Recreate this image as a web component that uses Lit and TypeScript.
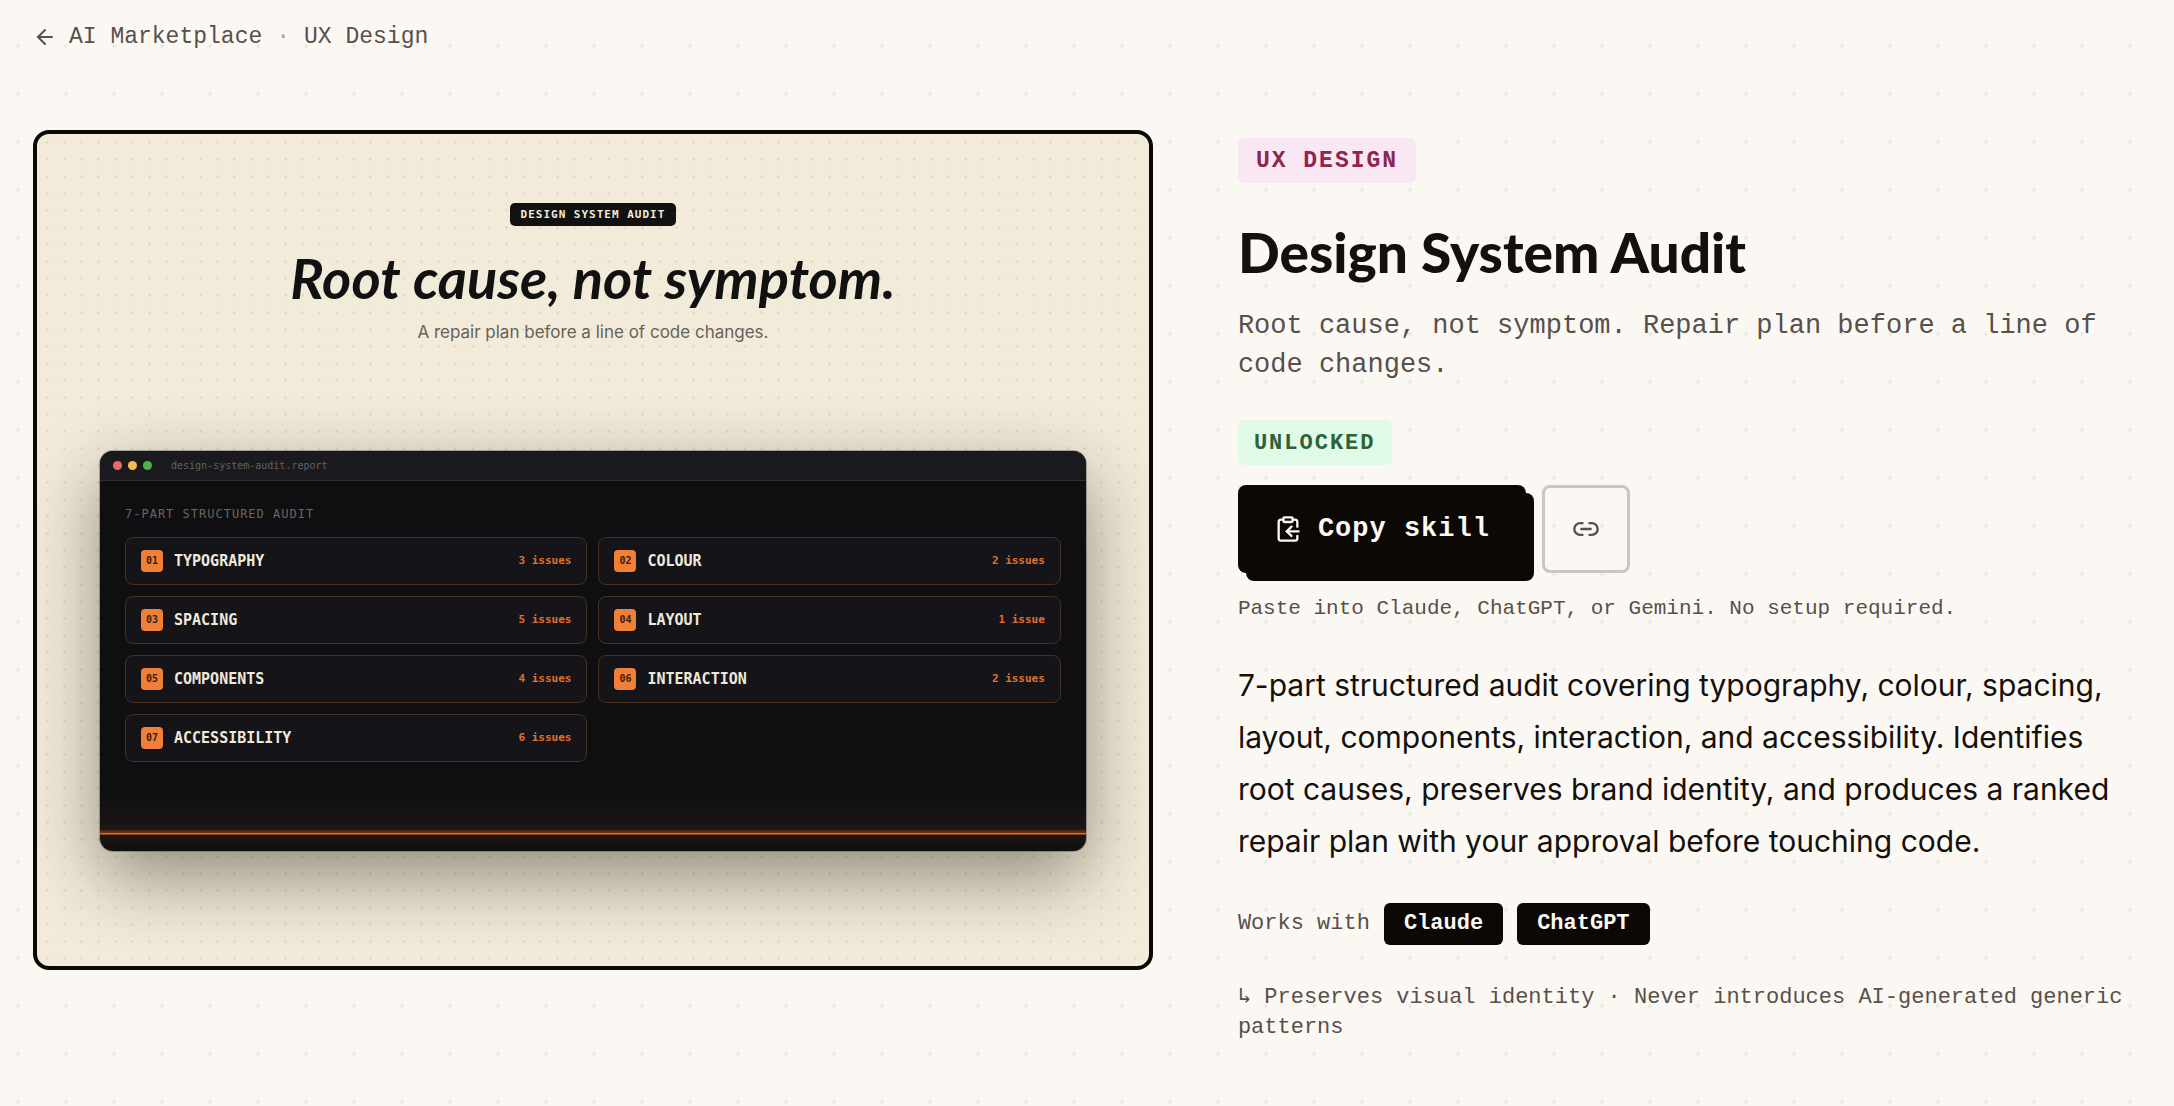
import { LitElement, html, svg, css } from "lit";
import { customElement, property } from "lit/decorators.js";

interface AuditPart {
  id: string;
  name: string;
  issues: number;
}

const PARTS: AuditPart[] = [
  { id: "01", name: "TYPOGRAPHY", issues: 3 },
  { id: "02", name: "COLOUR", issues: 2 },
  { id: "03", name: "SPACING", issues: 5 },
  { id: "04", name: "LAYOUT", issues: 1 },
  { id: "05", name: "COMPONENTS", issues: 4 },
  { id: "06", name: "INTERACTION", issues: 2 },
  { id: "07", name: "ACCESSIBILITY", issues: 6 },
];

const ICONS = {
  arrowLeft: svg`<path d="m12 19-7-7 7-7"/><path d="M19 12H5"/>`,
  clipboard: svg`<rect width="8" height="4" x="8" y="2" rx="1" ry="1"/><path d="M8 4H6a2 2 0 0 0-2 2v14a2 2 0 0 0 2 2h12a2 2 0 0 0 2-2v-2"/><path d="M16 4h2a2 2 0 0 1 2 2v4"/><path d="M21 14H11"/><path d="m15 10-4 4 4 4"/>`,
  link: svg`<path d="M9 17H7A5 5 0 0 1 7 7h2"/><path d="M15 7h2a5 5 0 1 1 0 10h-2"/><path d="M8 12h8"/>`,
};

function icon(name: keyof typeof ICONS, size: number) {
  return html`<svg width=${size} height=${size} viewBox="0 0 24 24" fill="none" stroke="currentColor"
    stroke-width="2" stroke-linecap="round" stroke-linejoin="round" aria-hidden="true">${ICONS[name]}</svg>`;
}

@customElement("audit-preview")
export class AuditPreview extends LitElement {
  @property({ attribute: false }) parts: AuditPart[] = [];

  static styles = css`
    :host {
      display: block;
    }
    .frame {
      box-sizing: border-box;
      aspect-ratio: 4 / 3;
      display: flex;
      flex-direction: column;
      align-items: center;
      padding: 69px 63px 115px;
      border: 4px solid #0c0805;
      border-radius: 16px;
      overflow: hidden;
      background-color: #f3ebd9;
      background-image: radial-gradient(circle, #e0d0b8 0, rgba(224, 208, 184, 0) 2px);
      background-size: 17px 17px;
      background-position: 2px 0;
    }
    .label {
      padding: 0 11px;
      border-radius: 5px;
      background: #111112;
      color: #f3ebd9;
      font: 700 11px/23px "DejaVu Sans Mono", monospace;
      letter-spacing: 1px;
    }
    .headline {
      margin: 18px 0 8px;
      color: #111112;
      font: italic 700 56px/68px Lato, sans-serif;
    }
    .tagline {
      margin: 0;
      color: #66625a;
      font: 400 17px/24px Inter, sans-serif;
    }
    .window {
      box-sizing: border-box;
      align-self: stretch;
      height: 400px;
      margin-top: auto;
      display: flex;
      flex-direction: column;
      border-radius: 13px;
      overflow: hidden;
      background: #0f0f11;
      box-shadow: 0 0 0 1px rgba(60, 60, 64, 0.35), 0 26px 72px rgba(20, 20, 10, 0.45);
      font-family: "DejaVu Sans Mono", monospace;
    }
    .bar {
      display: flex;
      align-items: center;
      gap: 6px;
      height: 29px;
      padding: 0 13px;
      background: #1a1a1e;
      border-bottom: 1px solid #2f2e2e;
    }
    .light {
      width: 9px;
      height: 9px;
      border-radius: 50%;
    }
    .red { background: #ee6a5f; }
    .amber { background: #f5bd4f; }
    .green { background: #4fb04c; }
    .file {
      margin-left: 13px;
      color: #626063;
      font-size: 10px;
    }
    .content {
      flex: 1;
      padding: 24px 25px 0;
    }
    .heading {
      margin: 0 0 14px;
      color: #6a6661;
      font-weight: 400;
      font-size: 12px;
      line-height: 18px;
      letter-spacing: 1px;
    }
    .grid {
      display: grid;
      grid-template-columns: repeat(2, minmax(0, 1fr));
      gap: 11px;
      margin: 0;
      padding: 0;
      list-style: none;
    }
    .part {
      box-sizing: border-box;
      display: flex;
      align-items: center;
      gap: 11px;
      height: 48px;
      padding: 0 15px;
      border: 1px solid #46301f;
      border-radius: 8px;
      background: #151519;
    }
    .badge {
      width: 22px;
      border-radius: 4px;
      background: #f07f38;
      color: #3d1c0b;
      font-weight: 700;
      font-size: 10px;
      line-height: 22px;
      text-align: center;
    }
    .name {
      flex: 1;
      color: #efe9da;
      font-weight: 700;
      font-size: 15px;
    }
    .issues {
      color: #e0702d;
      font-weight: 700;
      font-size: 11px;
    }
    .glow {
      height: 54px;
      background: linear-gradient(
        to bottom,
        rgba(240, 127, 56, 0) 0,
        rgba(240, 127, 56, 0.06) 32px,
        #6e2f0e 35px,
        #6e2f0e 36px,
        #cf7436 36px,
        #cf7436 37px,
        #8a4116 37px,
        #8a4116 38px,
        rgba(240, 127, 56, 0.06) 38px,
        rgba(240, 127, 56, 0) 54px
      );
    }
  `;

  render() {
    return html`
      <section class="frame">
        <span class="label">DESIGN SYSTEM AUDIT</span>
        <h2 class="headline">Root cause, not symptom.</h2>
        <p class="tagline">A repair plan before a line of code changes.</p>
        <div class="window">
          <div class="bar">
            <span class="light red"></span>
            <span class="light amber"></span>
            <span class="light green"></span>
            <span class="file">design-system-audit.report</span>
          </div>
          <div class="content">
            <h3 class="heading">7-PART STRUCTURED AUDIT</h3>
            <ul class="grid">
              ${this.parts.map(
                (p) => html`<li class="part">
                  <span class="badge">${p.id}</span>
                  <span class="name">${p.name}</span>
                  <span class="issues">${p.issues} ${p.issues === 1 ? "issue" : "issues"}</span>
                </li>`
              )}
            </ul>
          </div>
          <div class="glow"></div>
        </div>
      </section>
    `;
  }
}

@customElement("app-root")
export class AppRoot extends LitElement {
  static styles = css`
    :host {
      display: block;
      box-sizing: border-box;
      min-height: 100vh;
      padding: 0 33px 56px;
      background-color: #fbf8f3;
      background-image: radial-gradient(circle, #eceae5 0, #eceae5 2px, rgba(236, 234, 229, 0) 2px);
      background-size: 48px 48px;
      background-position: -6px 22px;
      color: #57504b;
      font-family: "Liberation Mono", monospace;
    }
    .crumbs {
      display: flex;
      align-items: center;
      gap: 14px;
      height: 74px;
      font-size: 23px;
    }
    .crumb {
      display: flex;
      align-items: center;
      gap: 12px;
      color: inherit;
      text-decoration: none;
    }
    .dot {
      color: #a8a19a;
    }
    .layout {
      display: grid;
      grid-template-columns: minmax(0, 31fr) minmax(0, 25fr);
      gap: 85px;
      align-items: start;
      margin-top: 56px;
    }
    .details {
      display: flex;
      flex-direction: column;
      align-items: flex-start;
      padding-top: 8px;
    }
    .tag {
      border-radius: 6px;
      font-weight: 700;
      line-height: 43px;
      letter-spacing: 2px;
    }
    .category {
      padding: 2px 18px 0;
      background: #f9e7f4;
      color: #8f2450;
      font-size: 23px;
    }
    .status {
      margin-top: 35px;
      padding: 2px 16px 0;
      background: #e1fae7;
      color: #2d6239;
      font-size: 22px;
    }
    .title {
      margin: 35px 0 21px;
      color: #14100b;
      font: 900 55px/68px Lato, sans-serif;
    }
    .subtitle {
      margin: 0;
      font-size: 27px;
      line-height: 39px;
    }
    .actions {
      display: flex;
      gap: 16px;
      margin-top: 20px;
    }
    .copy {
      display: flex;
      align-items: center;
      gap: 16px;
      height: 88px;
      padding: 0 36px;
      border: 0;
      border-radius: 8px;
      background: #0c0805;
      box-shadow: 8px 8px 0 #0c0805;
      color: #fbf8f3;
      font: 700 27px/36px "Liberation Mono", monospace;
      letter-spacing: 1px;
    }
    .share {
      display: flex;
      align-items: center;
      justify-content: center;
      width: 88px;
      height: 88px;
      padding: 0;
      border: 3px solid #cac7c2;
      border-radius: 8px;
      background: transparent;
      color: #57504b;
    }
    .hint {
      margin: 21px 0 0;
      font-size: 21px;
      line-height: 30px;
    }
    .description {
      margin: 35px 0 0;
      color: #14100b;
      font: 400 30px/52px Inter, sans-serif;
    }
    .works {
      display: flex;
      align-items: center;
      gap: 14px;
      margin-top: 36px;
      font-size: 22px;
      line-height: 42px;
    }
    .tool {
      padding: 0 20px;
      border-radius: 6px;
      background: #0c0805;
      color: #fbf8f3;
      font-weight: 700;
    }
    .footnote {
      margin: 38px 0 0;
      font-size: 22px;
      line-height: 30px;
    }
  `;

  render() {
    return html`
      <nav class="crumbs" aria-label="Breadcrumb">
        <a class="crumb" href="#marketplace">${icon("arrowLeft", 24)}AI Marketplace</a>
        <span class="dot">·</span>
        <a class="crumb" href="#ux-design">UX Design</a>
      </nav>
      <main class="layout">
        <audit-preview .parts=${PARTS}></audit-preview>
        <article class="details">
          <span class="tag category">UX DESIGN</span>
          <h1 class="title">Design System Audit</h1>
          <p class="subtitle">Root cause, not symptom. Repair plan before a line of code changes.</p>
          <span class="tag status">UNLOCKED</span>
          <div class="actions">
            <button class="copy" type="button">${icon("clipboard", 28)}Copy skill</button>
            <button class="share" type="button" aria-label="Copy link">${icon("link", 28)}</button>
          </div>
          <p class="hint">Paste into Claude, ChatGPT, or Gemini. No setup required.</p>
          <p class="description">
            7-part structured audit covering typography, colour, spacing, layout, components,
            interaction, and accessibility. Identifies root causes, preserves brand identity, and
            produces a ranked repair plan with your approval before touching code.
          </p>
          <div class="works">
            <span>Works with</span>
            <span class="tool">Claude</span>
            <span class="tool">ChatGPT</span>
          </div>
          <p class="footnote">↳ Preserves visual identity · Never introduces AI-generated generic patterns</p>
        </article>
      </main>
    `;
  }
}
